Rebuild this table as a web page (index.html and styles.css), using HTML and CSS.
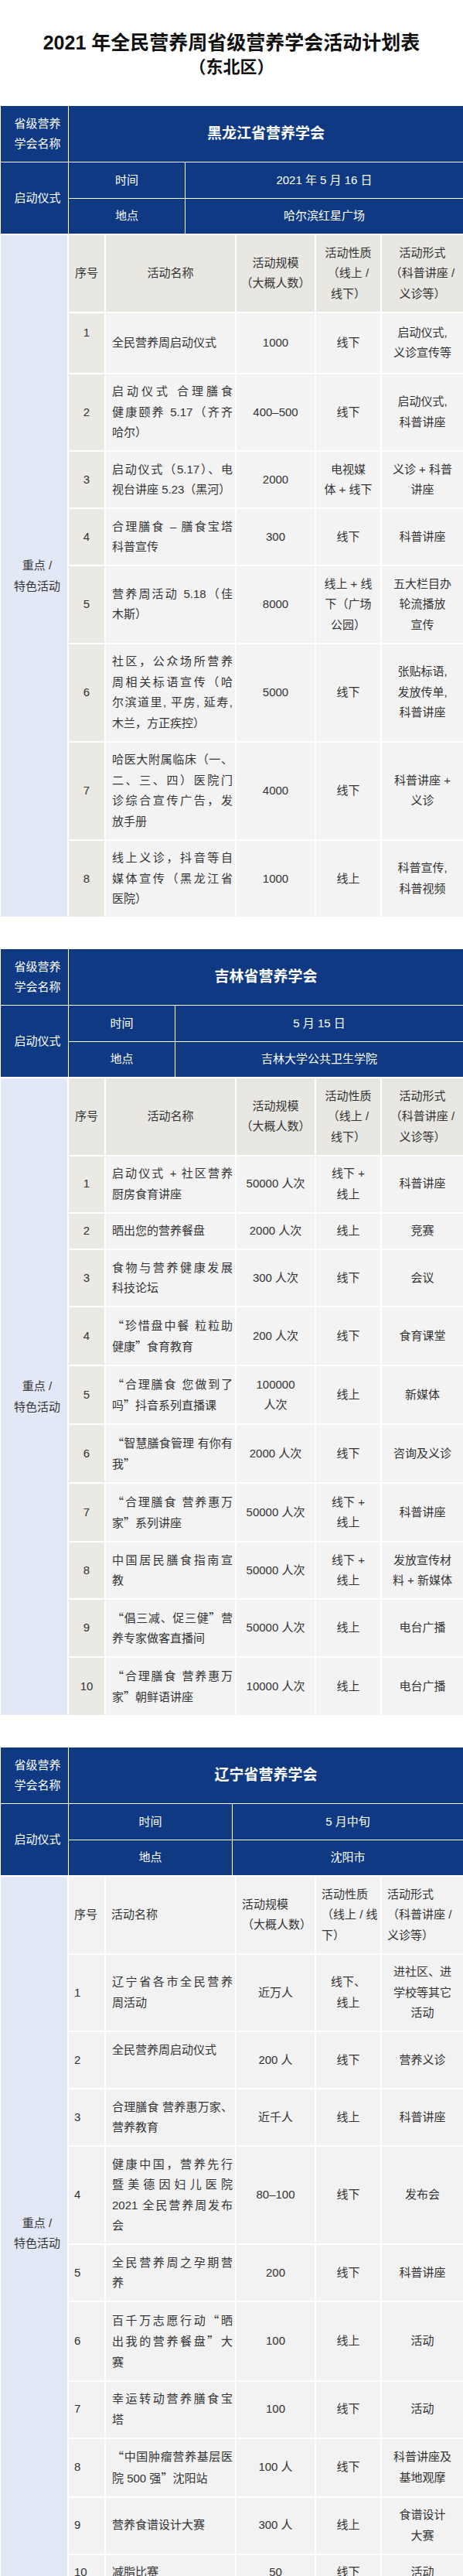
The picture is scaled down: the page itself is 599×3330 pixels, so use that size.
FILE: index.html
```html
<!DOCTYPE html>
<html lang="zh-CN">
<head>
<meta charset="utf-8">
<title>2021 年全民营养周省级营养学会活动计划表（东北区）</title>
<link rel="stylesheet" href="styles.css">
</head>
<body>
<main class="page">
  <header class="doc-head">
    <h1 class="doc-title">2021 年全民营养周省级营养学会活动计划表</h1>
    <p class="doc-sub">（东北区）</p>
  </header>

  <section class="province">
    <table class="info">
      <colgroup><col class="c-side"><col class="k-hlj"><col></colgroup>
      <tr><td class="side">省级营养<br>学会名称</td><td class="org" colspan="2">黑龙江省营养学会</td></tr>
      <tr><td class="side" rowspan="2">启动仪式</td><td>时间</td><td>2021 年 5 月 16 日</td></tr>
      <tr><td>地点</td><td>哈尔滨红星广场</td></tr>
    </table>
    <table class="plan">
      <colgroup><col class="c-side"><col class="c-seq"><col class="c-name"><col class="c-scale"><col class="c-kind"><col class="c-form"></colgroup>
      <tr class="head"><td class="side" rowspan="9">重点 /<br>特色活动</td><td>序号</td><td>活动名称</td><td>活动规模<br>（大概人数）</td><td>活动性质<br>（线上 /<br>线下）</td><td>活动形式<br>（科普讲座 /<br>义诊等）</td></tr>
      <tr class="tall"><td class="seq">1<br>&nbsp;</td><td class="name">全民营养周启动仪式</td><td>1000</td><td>线下</td><td>启动仪式,<br>义诊宣传等</td></tr>
      <tr><td class="seq">2</td><td class="name"><span class="jl">启动仪式 合理膳食</span><span class="jl">健康颐养 5.17（齐齐</span>哈尔）</td><td>400–500</td><td>线下</td><td>启动仪式,<br>科普讲座</td></tr>
      <tr><td class="seq">3</td><td class="name"><span class="jl">启动仪式（5.17）、电</span>视台讲座 5.23（黑河）</td><td>2000</td><td>电视媒<br>体 + 线下</td><td>义诊 + 科普<br>讲座</td></tr>
      <tr><td class="seq">4</td><td class="name"><span class="jl">合理膳食 – 膳食宝塔</span>科普宣传</td><td>300</td><td>线下</td><td>科普讲座</td></tr>
      <tr><td class="seq">5</td><td class="name"><span class="jl">营养周活动 5.18（佳</span>木斯）</td><td>8000</td><td>线上 + 线<br>下（广场<br>公园）</td><td>五大栏目办<br>轮流播放<br>宣传</td></tr>
      <tr><td class="seq">6</td><td class="name"><span class="jl">社区，公众场所营养</span><span class="jl">周相关标语宣传（哈</span><span class="jl">尔滨道里, 平房, 延寿,</span>木兰，方正疾控）</td><td>5000</td><td>线下</td><td>张贴标语,<br>发放传单,<br>科普讲座</td></tr>
      <tr><td class="seq">7</td><td class="name"><span class="jl">哈医大附属临床（一、</span><span class="jl">二、三、四）医院门</span><span class="jl">诊综合宣传广告，发</span>放手册</td><td>4000</td><td>线下</td><td>科普讲座 +<br>义诊</td></tr>
      <tr><td class="seq">8</td><td class="name"><span class="jl">线上义诊，抖音等自</span><span class="jl">媒体宣传（黑龙江省</span>医院）</td><td>1000</td><td>线上</td><td>科普宣传,<br>科普视频</td></tr>
    </table>
  </section>

  <section class="province">
    <table class="info">
      <colgroup><col class="c-side"><col class="k-jl"><col></colgroup>
      <tr><td class="side">省级营养<br>学会名称</td><td class="org" colspan="2">吉林省营养学会</td></tr>
      <tr><td class="side" rowspan="2">启动仪式</td><td>时间</td><td>5 月 15 日</td></tr>
      <tr><td>地点</td><td>吉林大学公共卫生学院</td></tr>
    </table>
    <table class="plan">
      <colgroup><col class="c-side"><col class="c-seq"><col class="c-name"><col class="c-scale"><col class="c-kind"><col class="c-form"></colgroup>
      <tr class="head"><td class="side" rowspan="11">重点 /<br>特色活动</td><td>序号</td><td>活动名称</td><td>活动规模<br>（大概人数）</td><td>活动性质<br>（线上 /<br>线下）</td><td>活动形式<br>（科普讲座 /<br>义诊等）</td></tr>
      <tr><td class="seq">1</td><td class="name"><span class="jl">启动仪式 + 社区营养</span>厨房食育讲座</td><td>50000 人次</td><td>线下 +<br>线上</td><td>科普讲座</td></tr>
      <tr><td class="seq">2</td><td class="name">晒出您的营养餐盘</td><td>2000 人次</td><td>线上</td><td>竞赛</td></tr>
      <tr><td class="seq">3</td><td class="name"><span class="jl">食物与营养健康发展</span>科技论坛</td><td>300 人次</td><td>线下</td><td>会议</td></tr>
      <tr><td class="seq">4</td><td class="name"><span class="jl"><span class="q">“</span>珍惜盘中餐 粒粒助</span>健康<span class="q">”</span>食育教育</td><td>200 人次</td><td>线下</td><td>食育课堂</td></tr>
      <tr><td class="seq">5</td><td class="name"><span class="jl"><span class="q">“</span>合理膳食 您做到了</span>吗<span class="q">”</span>抖音系列直播课</td><td>100000<br>人次</td><td>线上</td><td>新媒体</td></tr>
      <tr><td class="seq">6</td><td class="name"><span class="jl"><span class="q">“</span>智慧膳食管理 有你有</span>我<span class="q">”</span></td><td>2000 人次</td><td>线下</td><td>咨询及义诊</td></tr>
      <tr><td class="seq">7</td><td class="name"><span class="jl"><span class="q">“</span>合理膳食 营养惠万</span>家<span class="q">”</span>系列讲座</td><td>50000 人次</td><td>线下 +<br>线上</td><td>科普讲座</td></tr>
      <tr><td class="seq">8</td><td class="name"><span class="jl">中国居民膳食指南宣</span>教</td><td>50000 人次</td><td>线下 +<br>线上</td><td>发放宣传材<br>料 + 新媒体</td></tr>
      <tr><td class="seq">9</td><td class="name"><span class="jl"><span class="q">“</span>倡三减、促三健<span class="q">”</span>营</span>养专家做客直播间</td><td>50000 人次</td><td>线上</td><td>电台广播</td></tr>
      <tr><td class="seq">10</td><td class="name"><span class="jl"><span class="q">“</span>合理膳食 营养惠万</span>家<span class="q">”</span>朝鲜语讲座</td><td>10000 人次</td><td>线上</td><td>电台广播</td></tr>
    </table>
  </section>

  <section class="province">
    <table class="info">
      <colgroup><col class="c-side"><col class="k-ln"><col></colgroup>
      <tr><td class="side">省级营养<br>学会名称</td><td class="org" colspan="2">辽宁省营养学会</td></tr>
      <tr><td class="side" rowspan="2">启动仪式</td><td>时间</td><td>5 月中旬</td></tr>
      <tr><td>地点</td><td>沈阳市</td></tr>
    </table>
    <table class="plan plain">
      <colgroup><col class="c-side"><col class="c-seq"><col class="c-name"><col class="c-scale"><col class="c-kind"><col class="c-form"></colgroup>
      <tr class="head"><td class="side" rowspan="11">重点 /<br>特色活动</td><td>序号</td><td>活动名称</td><td>活动规模<br>（大概人数）</td><td>活动性质<br>（线上 / 线<br>下）</td><td>活动形式<br>（科普讲座 /<br>义诊等）</td></tr>
      <tr><td class="seq">1</td><td class="name"><span class="jl">辽宁省各市全民营养</span>周活动</td><td>近万人</td><td>线下、<br>线上</td><td>进社区、进<br>学校等其它<br>活动</td></tr>
      <tr><td class="seq">2</td><td class="name">全民营养周启动仪式<br>&nbsp;</td><td>200 人</td><td>线下</td><td>营养义诊</td></tr>
      <tr><td class="seq">3</td><td class="name"><span class="jl">合理膳食 营养惠万家、</span>营养教育</td><td>近千人</td><td>线上</td><td>科普讲座</td></tr>
      <tr><td class="seq">4</td><td class="name"><span class="jl">健康中国，营养先行</span><span class="jl">暨美德因妇儿医院</span><span class="jl">2021 全民营养周发布</span>会</td><td>80–100</td><td>线下</td><td>发布会</td></tr>
      <tr><td class="seq">5</td><td class="name"><span class="jl">全民营养周之孕期营</span>养</td><td>200</td><td>线下</td><td>科普讲座</td></tr>
      <tr><td class="seq">6</td><td class="name"><span class="jl">百千万志愿行动<span class="q">“</span>晒</span><span class="jl">出我的营养餐盘<span class="q">”</span>大</span>赛</td><td>100</td><td>线上</td><td>活动</td></tr>
      <tr><td class="seq">7</td><td class="name"><span class="jl">幸运转动营养膳食宝</span>塔</td><td>100</td><td>线下</td><td>活动</td></tr>
      <tr><td class="seq">8</td><td class="name"><span class="jl"><span class="q">“</span>中国肿瘤营养基层医</span>院 500 强<span class="q">”</span>沈阳站</td><td>100 人</td><td>线下</td><td>科普讲座及<br>基地观摩</td></tr>
      <tr><td class="seq">9</td><td class="name">营养食谱设计大赛</td><td>300 人</td><td>线上</td><td>食谱设计<br>大赛</td></tr>
      <tr><td class="seq">10</td><td class="name">减脂比赛</td><td>50</td><td>线下</td><td>活动</td></tr>
    </table>
  </section>
</main>
</body>
</html>
```

FILE: styles.css
```css
* {
  box-sizing: border-box;
}

html,
body {
  margin: 0;
  padding: 0;
  background: #ffffff;
}

body {
  font-family: "Liberation Sans", "Noto Sans CJK SC", sans-serif;
  font-size: 15px;
  color: #333333;
}

.page {
  width: 599px;
}

/* ---------- document heading ---------- */
.doc-head {
  padding: 38px 0 35px;
  text-align: center;
  color: #111111;
  font-weight: bold;
}

.doc-title {
  margin: 0;
  font-size: 25px;
  line-height: 34px;
  font-weight: bold;
}

.doc-sub {
  margin: 0;
  font-size: 22px;
  line-height: 30px;
}

/* ---------- province block ---------- */
.province {
  width: 598px;
  margin-left: 1px;
}

.province + .province {
  margin-top: 40px;
}

table {
  width: 598px;
  border-collapse: separate;
  border-spacing: 0;
  table-layout: fixed;
}

td {
  padding: 9.5px 4px;
  line-height: 26.5px;
  vertical-align: middle;
  text-align: center;
  white-space: nowrap;
}

/* column widths */
.c-side { width: 88px; }
.c-seq { width: 48px; }
.c-name { width: 169px; }
.c-scale { width: 103px; }
.c-kind { width: 85px; }
.c-form { width: 105px; }

.k-hlj { width: 151px; }
.k-jl { width: 138px; }
.k-ln { width: 212px; }

/* ---------- blue info rows ---------- */
.info td {
  background: #0f3a83;
  color: #ffffff;
  border-right: 1px solid #ffffff;
  border-bottom: 1px solid #ffffff;
}

.info td:last-child {
  border-right: 0;
}

.info .org {
  font-size: 19px;
  font-weight: bold;
}

td.side {
  padding-left: 14px;
  padding-right: 6px;
}

/* ---------- activity plan ---------- */
.plan td {
  background: #f3f3f3;
  border-right: 2px solid #ffffff;
  border-bottom: 2px solid #ffffff;
}

.plan tr:first-child td {
  border-top: 1px solid #ffffff;
}

.plan td:last-child {
  border-right: 0;
}

.plan .head td {
  background: #e9e7e2;
}

.plan td.seq {
  background: #ebe9e4;
}

.plan td.side {
  background: #e3e8f6;
}

.plan td.name {
  text-align: left;
  padding-left: 8px;
  padding-right: 3px;
  white-space: normal;
}

.plan .tall td {
  padding-top: 12px;
  padding-bottom: 12px;
}

.jl {
  display: block;
  text-align: justify;
  text-align-last: justify;
}

.q {
  font-family: "Noto Sans CJK SC", sans-serif;
}

/* third table: plain grey, left-aligned heading and numbers */
.plain .head td,
.plain td.seq {
  background: #f2f2f2;
}

.plain td {
  background: #f2f2f2;
}

.plain .head td,
.plain td.seq {
  text-align: left;
  padding-left: 7px;
}

.plain td.side {
  background: #e3e8f6;
  text-align: center;
  padding-left: 14px;
}
```
